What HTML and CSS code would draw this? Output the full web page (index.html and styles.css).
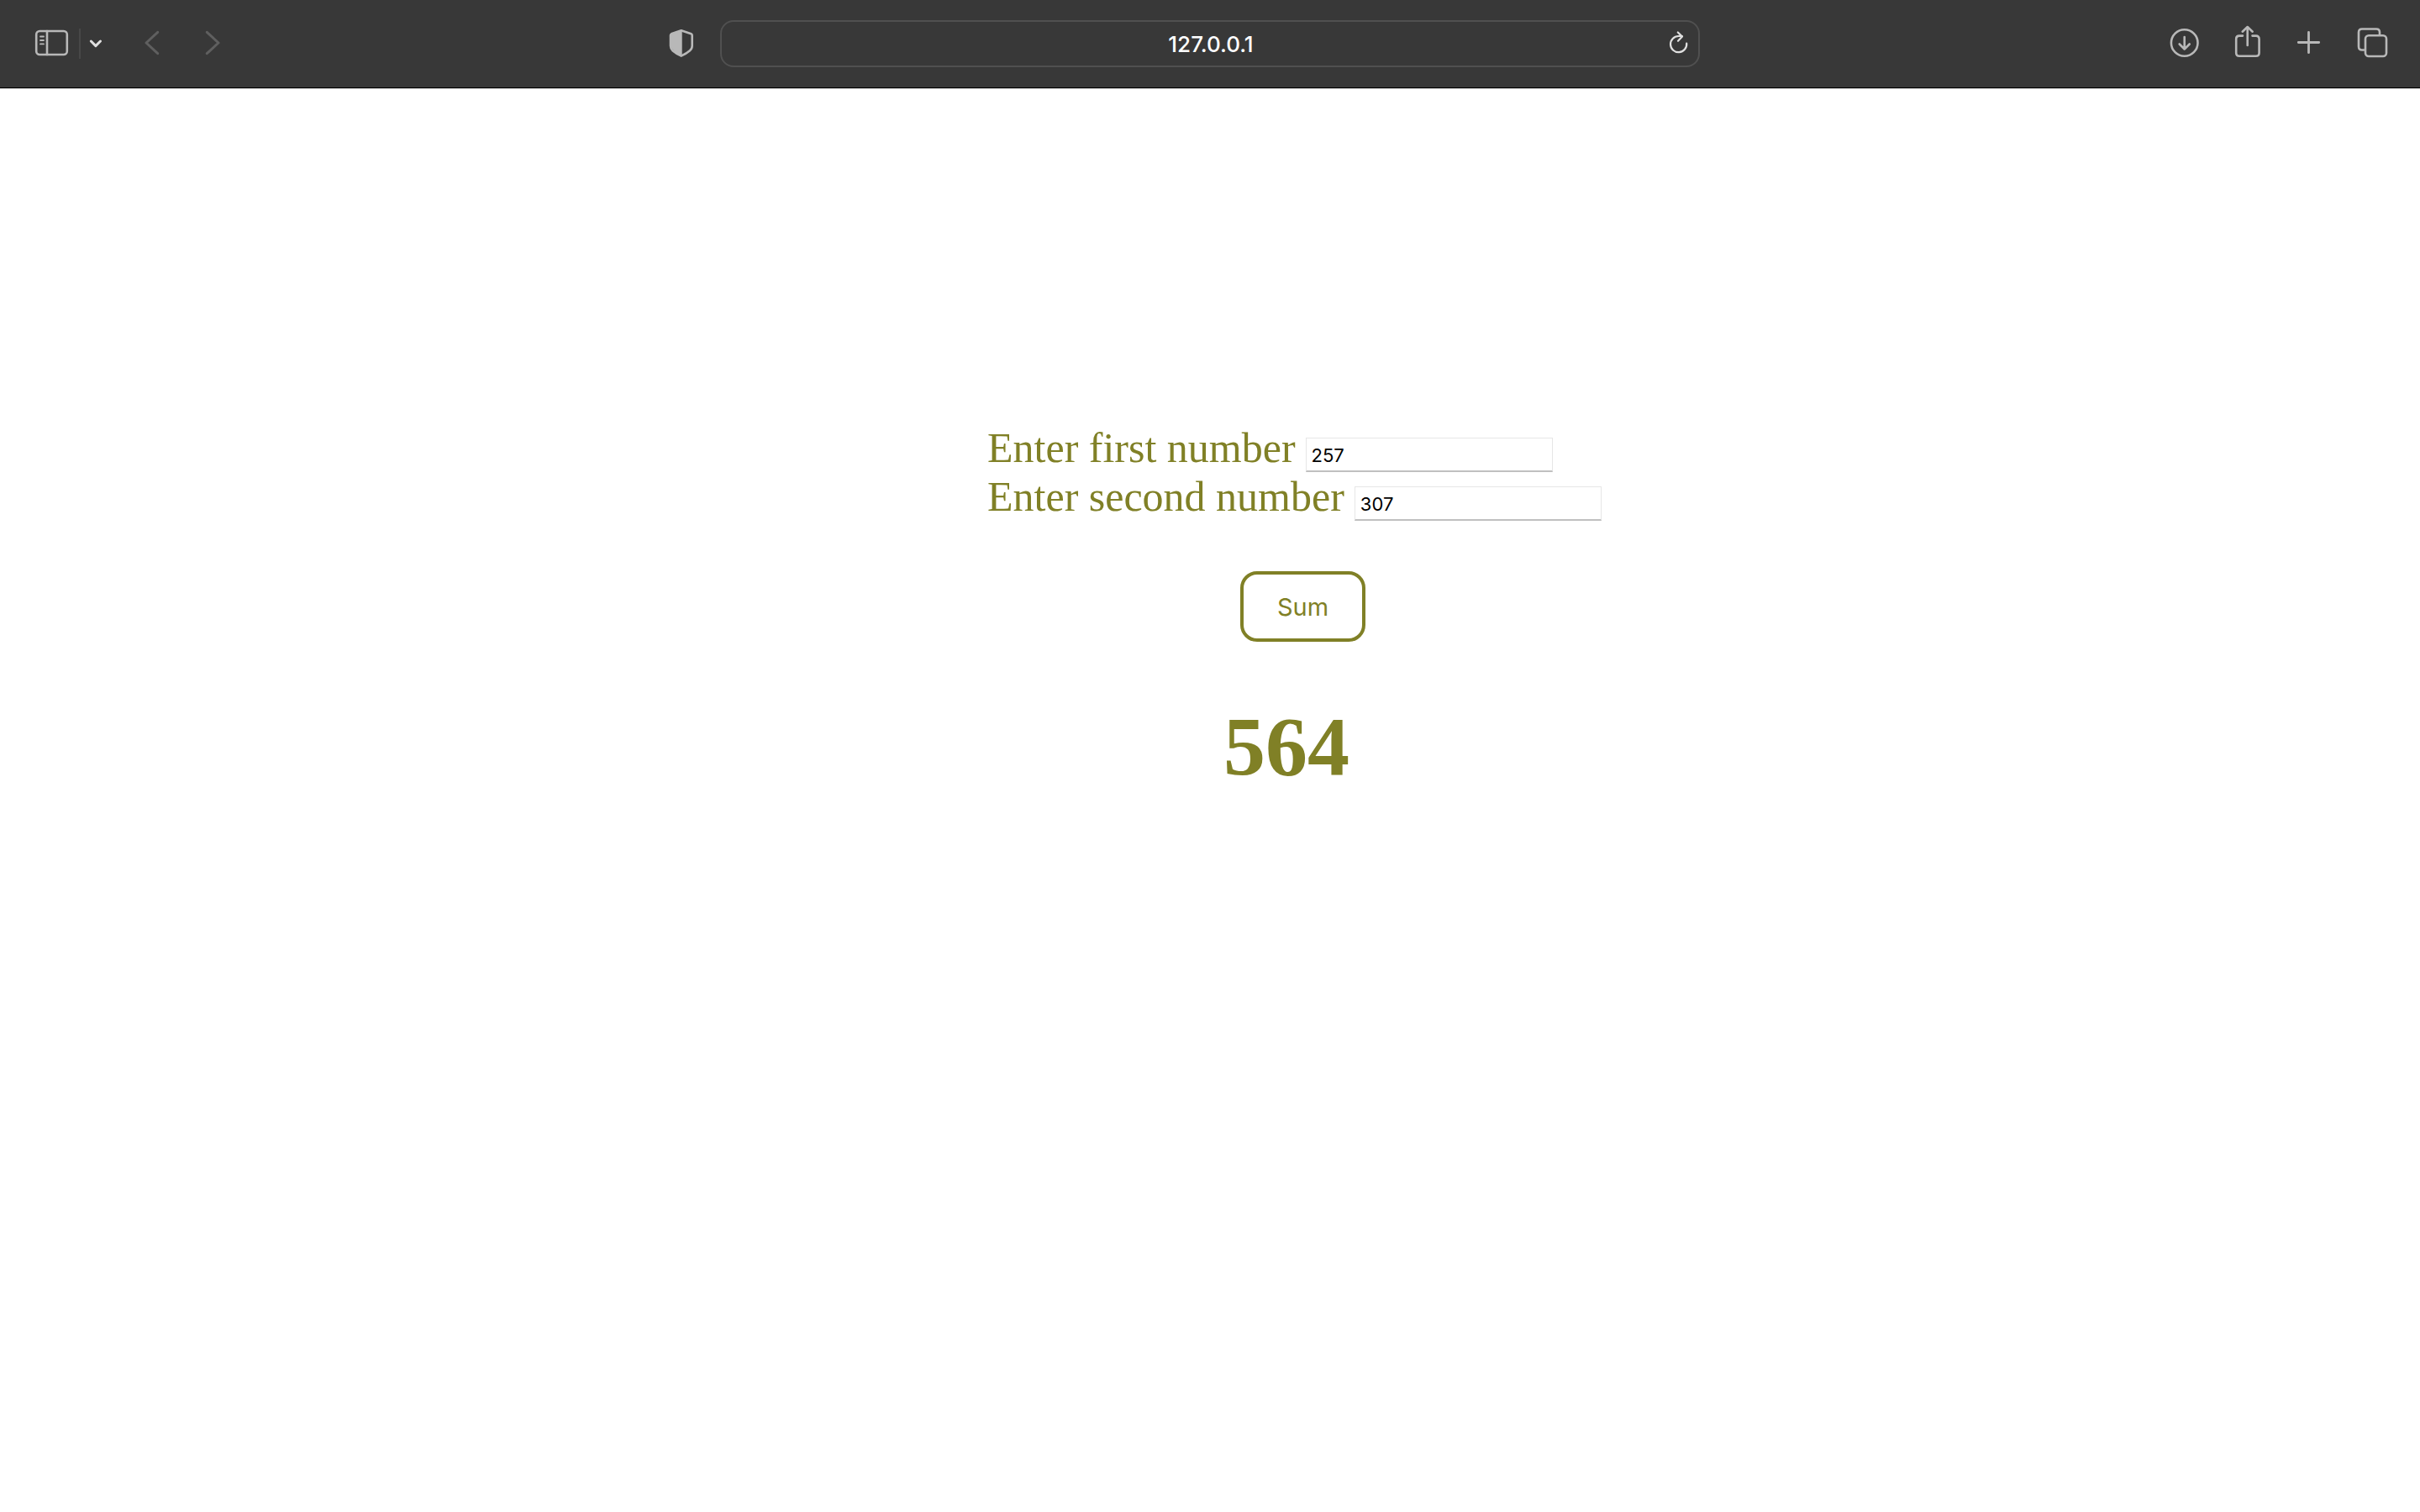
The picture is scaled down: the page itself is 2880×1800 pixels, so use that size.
FILE: index.html
```html
<!DOCTYPE html>
<html lang="en">
<head>
<meta charset="utf-8">
<title>Sum</title>
<link rel="stylesheet" href="styles.css">
</head>
<body>
<header class="toolbar">
  <div class="tools tools-left">
    <button class="tool" type="button" aria-label="Show sidebar">
      <svg class="icon" viewBox="0 0 44 44"><rect x="3.2" y="7" width="36.6" height="28" rx="4"/><path d="M16 7v28"/><path class="fine" d="M8 13.5h4M8 18h4M8 22.4h4"/></svg>
    </button>
    <span class="divider"></span>
    <button class="tool tool-narrow" type="button" aria-label="Tab groups">
      <svg class="icon bright" viewBox="0 0 36 44"><path class="bold" d="M12.3 19l5.6 5.6 5.6-5.6"/></svg>
    </button>
    <button class="tool tool-back" type="button" aria-label="Back">
      <svg class="icon dim" viewBox="0 0 44 44"><path d="M29.7 8.3L16 21l13.7 12.7"/></svg>
    </button>
    <button class="tool tool-forward" type="button" aria-label="Forward">
      <svg class="icon dim" viewBox="0 0 44 44"><path d="M15.3 8.3L29 21 15.3 33.7"/></svg>
    </button>
    <button class="tool tool-privacy" type="button" aria-label="Privacy report">
      <svg class="icon" viewBox="0 0 44 44"><path d="M21.7 6.2L33.5 10.3Q34.7 10.8 34.7 12V24.5Q34.7 28 32 30.3Q28 33.8 21.7 36.6Q15.4 33.8 11.5 30.3Q9 28 9 24.5V12Q9 10.8 10 10.3Z"/><path class="solid" d="M22.7 5.5L9.5 10.5V26L14 32 22.7 37Z"/></svg>
    </button>
  </div>
  <div class="address">
    <input class="url" type="text" value="127.0.0.1" aria-label="Address">
    <button class="tool tool-reload" type="button" aria-label="Reload">
      <svg class="icon bright" viewBox="0 0 44 44"><path class="light" d="M32.2 21.7A9.6 9.6 0 1 1 22.6 13H27M21.8 8.5L27 13.6 22 18.8"/></svg>
    </button>
  </div>
  <div class="tools tools-right">
    <button class="tool" type="button" aria-label="Downloads">
      <svg class="icon" viewBox="0 0 44 44"><circle cx="22.7" cy="21" r="15.8"/><path d="M22.7 14v14.5M16.7 22.5l6 6 6-6"/></svg>
    </button>
    <button class="tool" type="button" aria-label="Share">
      <svg class="icon" viewBox="0 0 44 44"><path d="M17 12.6h-4Q9.2 12.6 9.2 16.4V33Q9.2 36.8 13 36.8H32.8Q36.6 36.8 36.6 33V16.4Q36.6 12.6 32.8 12.6H28.5M22.7 24V3M16.7 7.7l6-5.7 6 5.7"/></svg>
    </button>
    <button class="tool" type="button" aria-label="New tab">
      <svg class="icon" viewBox="0 0 44 44"><path class="medium" d="M20.5 8.3v24.4M8.3 20.5h24.4"/></svg>
    </button>
    <button class="tool" type="button" aria-label="Tab overview">
      <svg class="icon" viewBox="0 0 44 44"><rect x="13" y="12.2" width="25" height="24.8" rx="4"/><path d="M12.5 29.5H9Q5 29.5 5 25.5V8.5Q5 4.5 9 4.5H26Q30 4.5 30 8.5V11"/></svg>
    </button>
  </div>
</header>
<main class="page">
  <form class="sum-form">
    <div class="field"><label for="first">Enter first number</label><input class="number" id="first" type="text" value="257"></div>
    <div class="field"><label for="second">Enter second number</label><input class="number" id="second" type="text" value="307"></div>
    <button class="sum" type="button">Sum</button>
  </form>
  <h1 class="result">564</h1>
</main>
</body>
</html>
```
FILE: styles.css
```css
* {
  box-sizing: border-box;
}

body {
  margin: 0;
  background: #fff;
  color: #808026;
  font-family: "Liberation Serif", "Times New Roman", serif;
}

button,
input {
  margin: 0;
  font-family: Inter, "Liberation Sans", sans-serif;
}

.toolbar {
  display: grid;
  grid-template-columns: 1fr 1166px 1fr;
  align-items: center;
  height: 106px;
  padding-bottom: 1px;
  border-bottom: 1px solid #c4c4c4;
  background: #383838;
  box-shadow: inset 0 -1px #000;
}

.tools {
  display: flex;
  align-items: center;
}

.tools-left {
  padding: 0 24px 0 40px;
}

.tools-right {
  justify-content: flex-end;
  gap: 31px;
  padding-right: 34px;
}

.tool {
  display: flex;
  width: 44px;
  height: 44px;
  padding: 0;
  border: 0;
  background: none;
}

.tool-narrow {
  width: 36px;
}

.tool-back {
  margin-left: 26px;
}

.tool-forward {
  margin-left: 29px;
}

.tool-privacy {
  margin-left: auto;
}

.icon {
  width: 100%;
  height: 100%;
  fill: none;
  stroke: #b8b8b8;
  stroke-width: 2.6;
  stroke-linecap: round;
  stroke-linejoin: round;
}

.icon.bright {
  stroke: #e0e0e0;
}

.icon.dim {
  stroke: #5f5f5f;
  stroke-width: 3;
}

.fine {
  stroke-width: 1.8;
}

.light {
  stroke-width: 2.2;
}

.medium {
  stroke-width: 2.8;
}

.bold {
  stroke-width: 3;
}

.solid {
  fill: #b8b8b8;
  stroke: none;
}

.divider {
  width: 2px;
  height: 36px;
  margin-left: 10px;
  background: #484848;
}

.address {
  display: flex;
  align-items: center;
  height: 56px;
  padding: 0 2px 0 48px;
  border: 2px solid #505050;
  border-radius: 16px;
}

.url {
  flex: 1;
  min-width: 0;
  height: 40px;
  padding: 0;
  border: 0;
  background: none;
  color: #fff;
  font-size: 26px;
  font-weight: 500;
  text-align: center;
}

.page {
  padding: 398px 0 0 calc(50% - 265px);
}

.sum-form {
  font-size: 50px;
  line-height: 58px;
}

.field {
  display: flex;
  align-items: baseline;
  gap: 12px;
}

.number {
  width: 294px;
  height: 41px;
  padding: 3px 6px 0;
  border: 1px solid #e6e6e6;
  border-bottom: 2px solid #c0c0c0;
  background: #fff;
  color: #000;
  font-size: 22px;
}

.sum {
  display: block;
  width: 149px;
  height: 84px;
  margin: 60px 0 0 301px;
  padding: 0;
  border: 4px solid #808026;
  border-radius: 20px;
  background: #fff;
  color: #808026;
  font-size: 29px;
}

.result {
  margin: 67px 0 0 281px;
  font-size: 100px;
  line-height: 116px;
}
```
